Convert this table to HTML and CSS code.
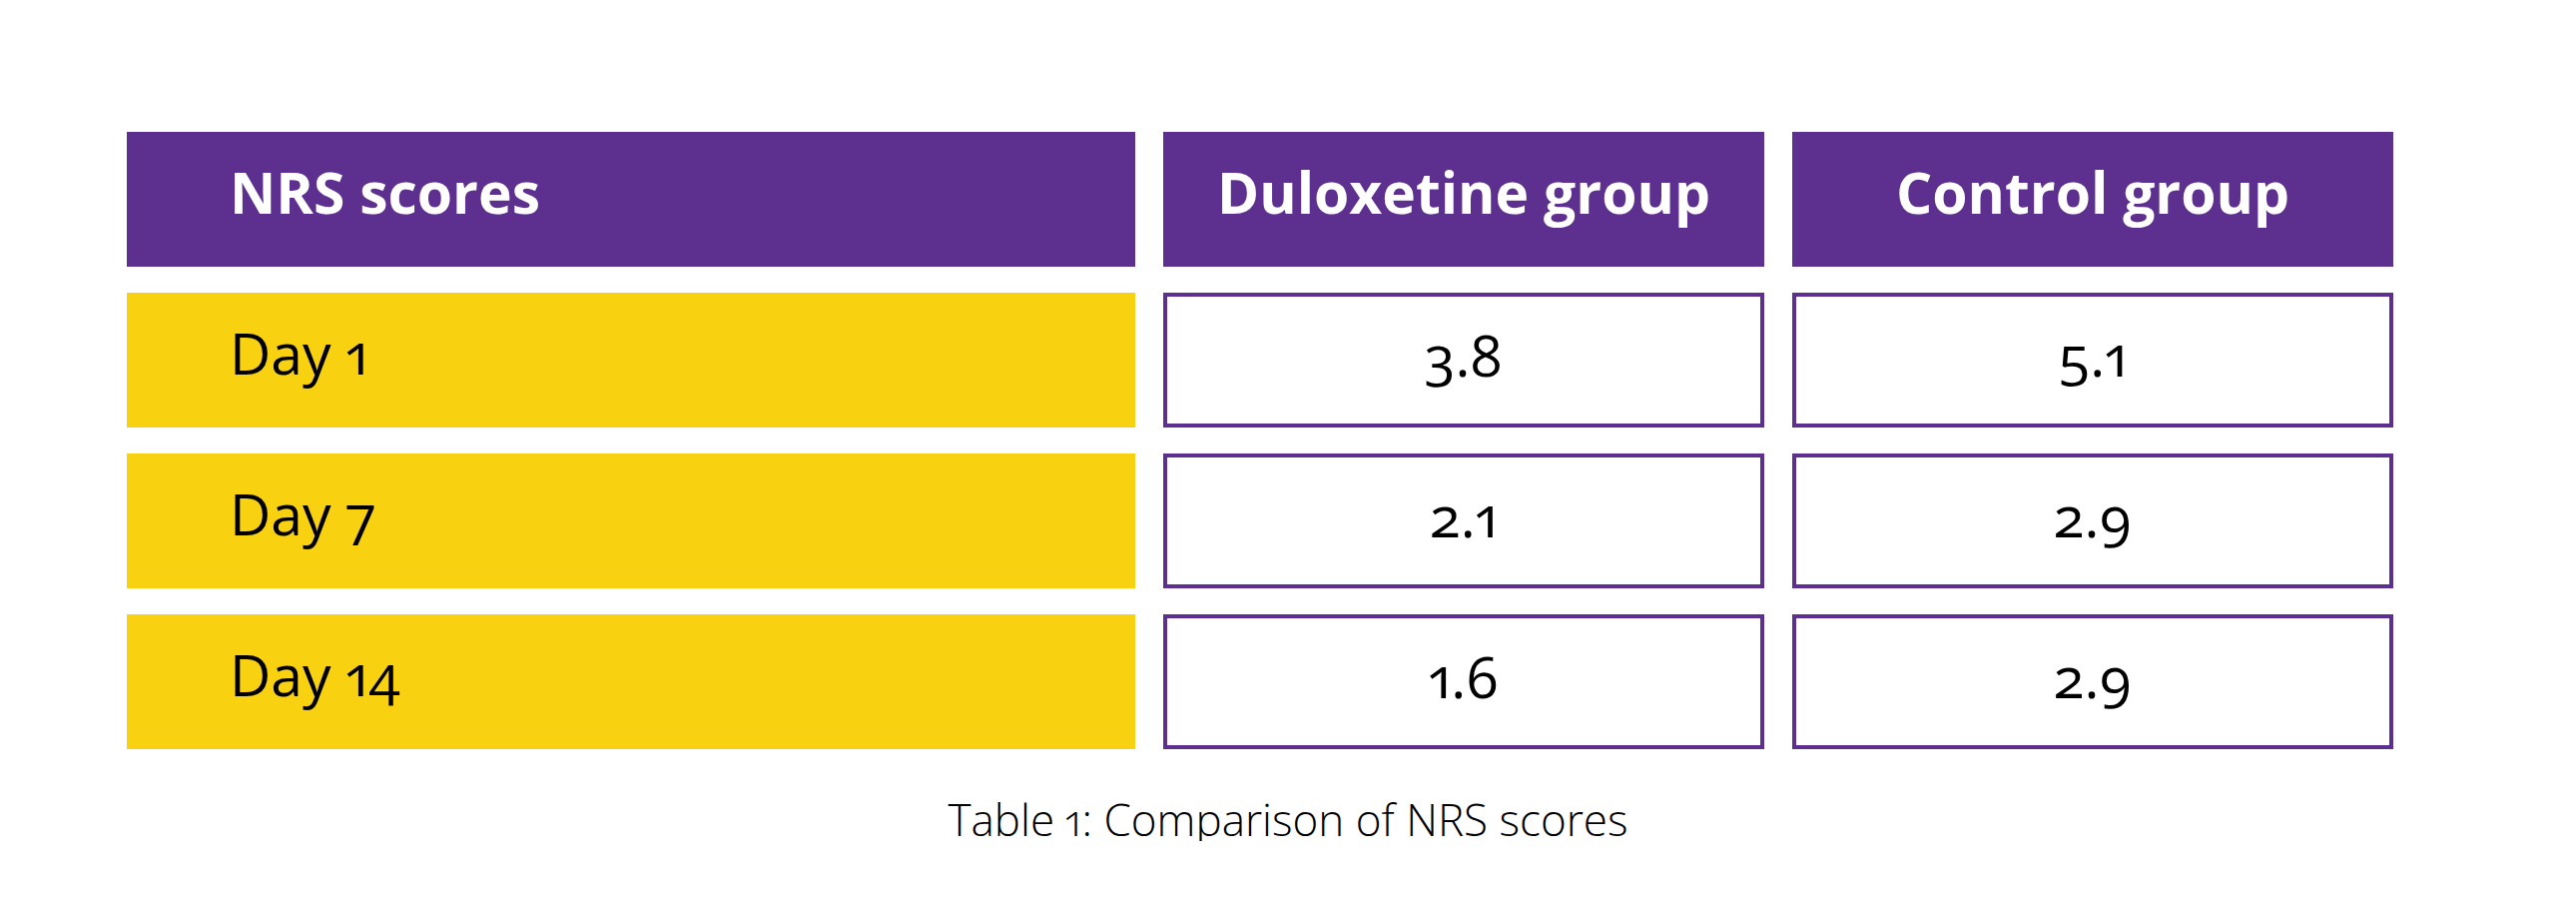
FILE: index.html
```html
<!DOCTYPE html>
<html lang="en">
<head>
<meta charset="utf-8">
<title>Comparison of NRS scores</title>
<link rel="stylesheet" href="styles.css">
</head>
<body>
<main class="page">
  <div class="table">
    <div class="cell head first">NRS scores</div>
    <div class="cell head">Duloxetine group</div>
    <div class="cell head">Control group</div>

    <div class="cell label">Day 1</div>
    <div class="cell value">3.8</div>
    <div class="cell value">5.1</div>

    <div class="cell label">Day 7</div>
    <div class="cell value">2.1</div>
    <div class="cell value">2.9</div>

    <div class="cell label">Day 14</div>
    <div class="cell value">1.6</div>
    <div class="cell value">2.9</div>
  </div>
  <p class="caption">Table 1: Comparison of NRS scores</p>
</main>
</body>
</html>
```

FILE: styles.css
```css
html, body {
  margin: 0;
  padding: 0;
  background: #ffffff;
}

body {
  font-family: "Open Sans", "Noto Sans", sans-serif;
  color: #000000;
  font-variant-numeric: oldstyle-nums proportional-nums;
}

.page {
  padding: 132px 0 0 127px;
}

.table {
  display: grid;
  grid-template-columns: 1010px 602px 602px;
  grid-auto-rows: 135px;
  column-gap: 28px;
  row-gap: 26px;
}

.cell {
  box-sizing: border-box;
  display: flex;
  align-items: center;
  justify-content: center;
  padding-bottom: 14px;
  font-size: 57px;
  line-height: 1.2;
}

.head {
  background: #5d2f8e;
  color: #ffffff;
  font-weight: 700;
}

.head.first,
.label {
  justify-content: flex-start;
  padding-left: 103px;
}

.label {
  background: #f8d211;
  font-weight: 400;
}

.value {
  background: #ffffff;
  border: 4px solid #5d2f8e;
  padding-bottom: 10px;
  font-weight: 400;
}

.caption {
  margin: 48px 0 0 -127px;
  text-align: center;
  font-size: 44px;
  font-weight: 300;
  line-height: 44px;
}
```
